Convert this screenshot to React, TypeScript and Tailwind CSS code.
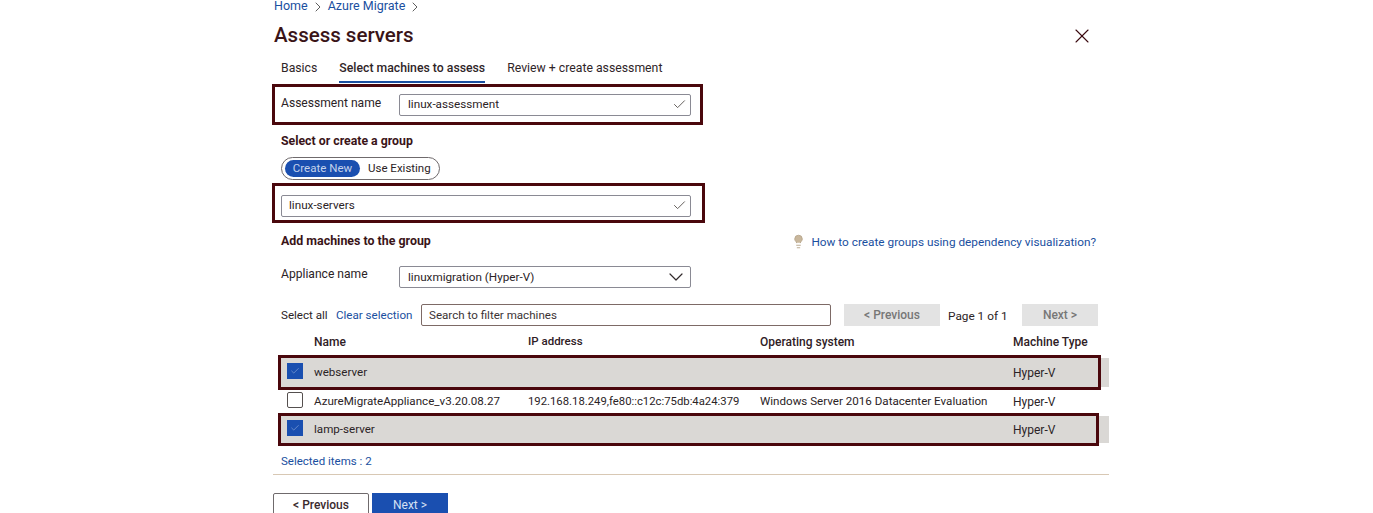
import { ChevronDown, Check, X, ChevronRight, Lightbulb } from "lucide-react";

const maroon = "border-[#4a070c]";

function Field({ value, width, icon }: { value: string; width: string; icon: "check" | "chevron" }) {
  return (
    <div className={`flex h-[22px] items-center justify-between rounded-[2px] border border-[#8a8a94] pl-[8px] pr-[3px] ${width}`}>
      <span className="pt-[1px] text-[11.7px] text-[#2b2326]">{value}</span>
      {icon === "check" ? (
        <Check size={15} strokeWidth={1.5} className="text-[#5b5552]" />
      ) : (
        <ChevronDown size={24} strokeWidth={1.2} className="mr-[-1px] text-[#322a2c]" />
      )}
    </div>
  );
}

function CheckBox({ checked }: { checked: boolean }) {
  return checked ? (
    <div className="mb-[4px] flex h-[16px] w-[16px] items-center justify-center bg-[#1a4fb0]">
      <Check size={10} strokeWidth={1} className="text-[#c9d6ee]" />
    </div>
  ) : (
    <div className="mb-[4px] h-[16px] w-[16px] rounded-[2px] border border-[#55504f] bg-white" />
  );
}

function Row({ name, ip, os, checked }: { name: string; ip?: string; os?: string; checked: boolean }) {
  return (
    <div className="grid h-full grid-cols-[27px_214px_232px_253px_1fr] items-center pl-[9px] text-[11.6px] text-[#2b2326]">
      <CheckBox checked={checked} />
      <span className="pt-[1px]">{name}</span>
      <span className="pt-[1px] text-[11.3px]">{ip}</span>
      <span className="pt-[1px]">{os}</span>
      <span className="text-[12px]">Hyper-V</span>
    </div>
  );
}

export default function App() {
  return (
    <div className="h-[513px] overflow-hidden bg-white font-['Roboto',sans-serif]">
      <div className="ml-[273px] w-[836px]">
        <div className="flex h-[13px] items-center gap-[2px] pl-[1px] text-[12.5px] leading-none text-[#1a4fa0]">
          <span>Home</span>
          <ChevronRight size={16} strokeWidth={1.3} className="text-[#444]" />
          <span>Azure Migrate</span>
          <ChevronRight size={16} strokeWidth={1.3} className="text-[#444]" />
        </div>

        <div className="mt-[8px] flex h-[28px] items-center justify-between pr-[15px] pl-[1px]">
          <h1 className="pt-[1px] text-[20.5px] leading-none font-medium text-[#3a1418]">Assess servers</h1>
          <X size={24} strokeWidth={1.1} className="mt-[1px] text-[#3a0a10]" />
        </div>

        <div className="mt-[9px] ml-[8px] flex h-[25px] gap-[22px] text-[12.25px] text-[#2f2528]">
          <span className="pt-[1px]">Basics</span>
          <span className="border-b-2 border-[#1a4fa0] pt-[1px] font-medium">Select machines to assess</span>
          <span className="pt-[1px]">Review + create assessment</span>
        </div>

        <div className={`ml-[-1px] mt-[1px] flex h-[41px] w-[431px] items-center border-[3px] ${maroon} pl-[6px]`}>
          <span className="w-[118px] pb-[3px] text-[12.1px] text-[#2b2326]">Assessment name</span>
          <Field value="linux-assessment" width="w-[292px]" icon="check" />
        </div>

        <h2 className="mt-[8px] ml-[8px] h-[16px] text-[12.3px] leading-[16px] font-bold text-[#3a1418]">Select or create a group</h2>

        <div className="mt-[8px] ml-[8px] flex h-[23px] w-[159px] items-center rounded-full border border-[#6f6a6c] pl-[3px] text-[11.5px]">
          <span className="flex h-[17px] w-[75px] items-center justify-center rounded-full bg-[#1a4fb0] text-[#c4d2ec]">Create New</span>
          <span className="ml-[8px] text-[#2b2326]">Use Existing</span>
        </div>

        <div className={`ml-[-1px] mt-[3px] flex h-[40px] w-[433px] items-center border-[3px] ${maroon} pl-[6px]`}>
          <Field value="linux-servers" width="w-[410px] mt-[5px] !pl-[7px]" icon="check" />
        </div>

        <div className="mt-[10px] ml-[8px] flex h-[16px] items-center justify-between pr-[13px]">
          <h2 className="text-[12.4px] font-bold text-[#3a1418]">Add machines to the group</h2>
          <div className="flex items-center gap-[5px] text-[11.8px] text-[#1a4fa0]">
            <Lightbulb size={15} strokeWidth={1.5} className="fill-[#c9b79c] text-[#b8a78e]" />
            <span className="pt-[3px]">How to create groups using dependency visualization?</span>
          </div>
        </div>

        <div className="mt-[17px] ml-[8px] flex h-[22px] items-center">
          <span className="w-[118px] pb-[5px] text-[12.1px] text-[#2b2326]">Appliance name</span>
          <Field value="linuxmigration (Hyper-V)" width="w-[292px]" icon="chevron" />
        </div>

        <div className="mt-[16px] ml-[8px] flex h-[22px] items-center text-[11.6px]">
          <span className="w-[55px] pt-[1px] text-[#2b2326]">Select all</span>
          <span className="w-[85px] pt-[1px] text-[#1a4fa0]">Clear selection</span>
          <div className="flex h-[22px] w-[410px] items-center rounded-[2px] border border-[#7d6a66] pt-[1px] pl-[7px] text-[#3b3335]">
            Search to filter machines
          </div>
          <button className="ml-[13px] h-[22px] w-[96px] bg-[#e3e3e3] text-[12px] font-medium text-[#777]">&lt; Previous</button>
          <span className="ml-[8px] w-[66px] pt-[3px] text-[11.8px] text-[#2b2326]">Page 1 of 1</span>
          <button className="ml-[8px] h-[22px] w-[76px] bg-[#e3e3e3] text-[12px] font-medium text-[#777]">Next &gt;</button>
        </div>

        <div className="mt-[6px] grid h-[20px] grid-cols-[36px_214px_232px_253px_1fr] items-center pl-[5px] text-[12px] font-medium text-[#2f2025]">
          <span />
          <span>Name</span>
          <span className="text-[11.5px]">IP address</span>
          <span>Operating system</span>
          <span>Machine Type</span>
        </div>

        <div className="relative mt-[6px] ml-[5px] h-[29px] w-[831px] bg-[#dad8d5]">
          <Row name="webserver" checked />
          <div className={`absolute top-[-3px] left-0 h-[35px] w-[823px] border-[3px] ${maroon}`} />
        </div>
        <div className="ml-[5px] h-[29px] w-[831px]">
          <Row name="AzureMigrateAppliance_v3.20.08.27" ip="192.168.18.249,fe80::c12c:75db:4a24:379" os="Windows Server 2016 Datacenter Evaluation" checked={false} />
        </div>
        <div className="relative ml-[5px] h-[27px] w-[831px] bg-[#dad8d5]">
          <Row name="lamp-server" checked />
          <div className={`absolute top-[-3px] left-0 h-[33px] w-[821px] border-[3px] ${maroon}`} />
        </div>

        <div className="mt-[10px] ml-[8px] h-[16px] text-[11.5px] leading-[16px] text-[#1a4fa0]">Selected items : 2</div>

        <div className="mt-[5px] border-t border-[#d8c8b4]" />

        <div className="mt-[18px] flex gap-[3px] text-[12px]">
          <button className="h-[28px] w-[96px] rounded-[2px] border border-[#6f6a6c] pb-[4px] font-medium text-[#3a2a2e]">&lt; Previous</button>
          <button className="h-[28px] w-[76px] bg-[#1a4fb0] pb-[4px] text-[#d5e0f3]">Next &gt;</button>
        </div>
      </div>
    </div>
  );
}
